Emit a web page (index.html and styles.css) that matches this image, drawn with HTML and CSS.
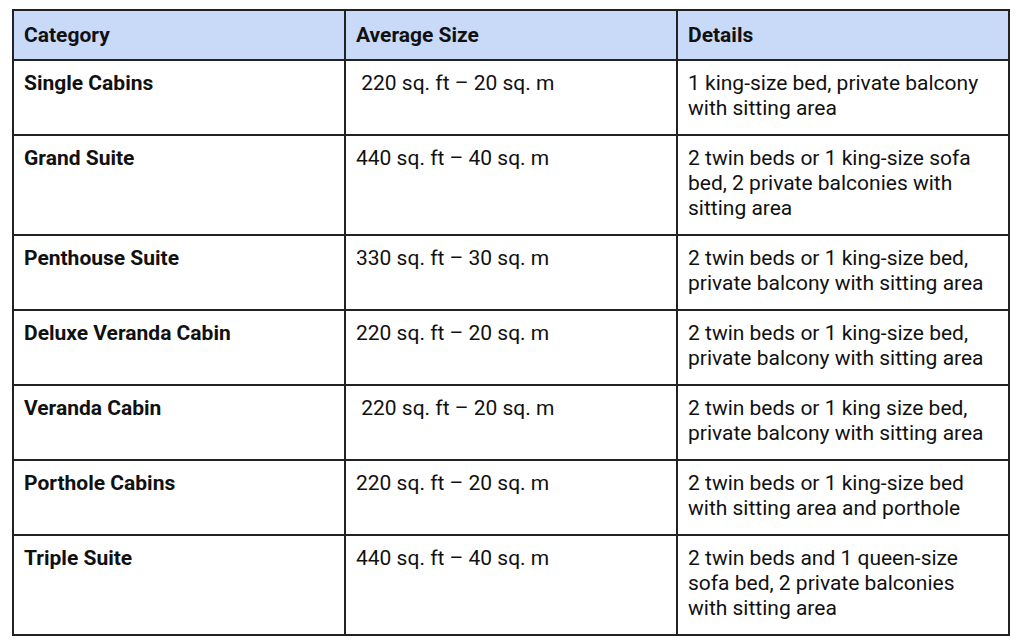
FILE: index.html
```html
<!DOCTYPE html>
<html>
<head>
<meta charset="utf-8">
<link rel="stylesheet" href="styles.css">
</head>
<body>
<table class="cabins">
  <thead>
    <tr><th>Category</th><th>Average Size</th><th>Details</th></tr>
  </thead>
  <tbody>
    <tr><td class="cat">Single Cabins</td><td>&nbsp;220 sq. ft – 20 sq. m</td><td>1 king-size bed, private balcony with sitting area</td></tr>
    <tr><td class="cat">Grand Suite</td><td>440 sq. ft – 40 sq. m</td><td>2 twin beds or 1 king-size sofa bed, 2 private balconies with sitting area</td></tr>
    <tr><td class="cat">Penthouse Suite</td><td>330 sq. ft – 30 sq. m</td><td>2 twin beds or 1 king-size bed, private balcony with sitting area</td></tr>
    <tr><td class="cat">Deluxe Veranda Cabin</td><td>220 sq. ft – 20 sq. m</td><td>2 twin beds or 1 king-size bed, private balcony with sitting area</td></tr>
    <tr><td class="cat">Veranda Cabin</td><td>&nbsp;220 sq. ft – 20 sq. m</td><td>2 twin beds or 1 king size bed, private balcony with sitting area</td></tr>
    <tr><td class="cat">Porthole Cabins</td><td>220 sq. ft – 20 sq. m</td><td>2 twin beds or 1 king-size bed with sitting area and porthole</td></tr>
    <tr><td class="cat">Triple Suite</td><td>440 sq. ft – 40 sq. m</td><td>2 twin beds and 1 queen-size sofa bed, 2 private balconies with sitting area</td></tr>
  </tbody>
</table>
</body>
</html>
```
FILE: styles.css
```css
html, body {
  margin: 0;
  padding: 0;
  background: #ffffff;
}
body {
  padding: 9px 0 0 12px;
  font-family: Roboto, "Liberation Sans", sans-serif;
  color: #111;
}
.cabins {
  border-collapse: collapse;
  width: 998px;
  table-layout: fixed;
  font-size: 21px;
  line-height: 25px;
}
.cabins th, .cabins td {
  border: 2px solid #222;
  padding: 10px 10px 13px 10px;
  text-align: left;
  vertical-align: top;
}
.cabins th {
  background: #c9daf8;
  font-weight: 700;
  padding: 12px 10px 11px 10px;
}
.cabins td.cat {
  font-weight: 700;
}
```
